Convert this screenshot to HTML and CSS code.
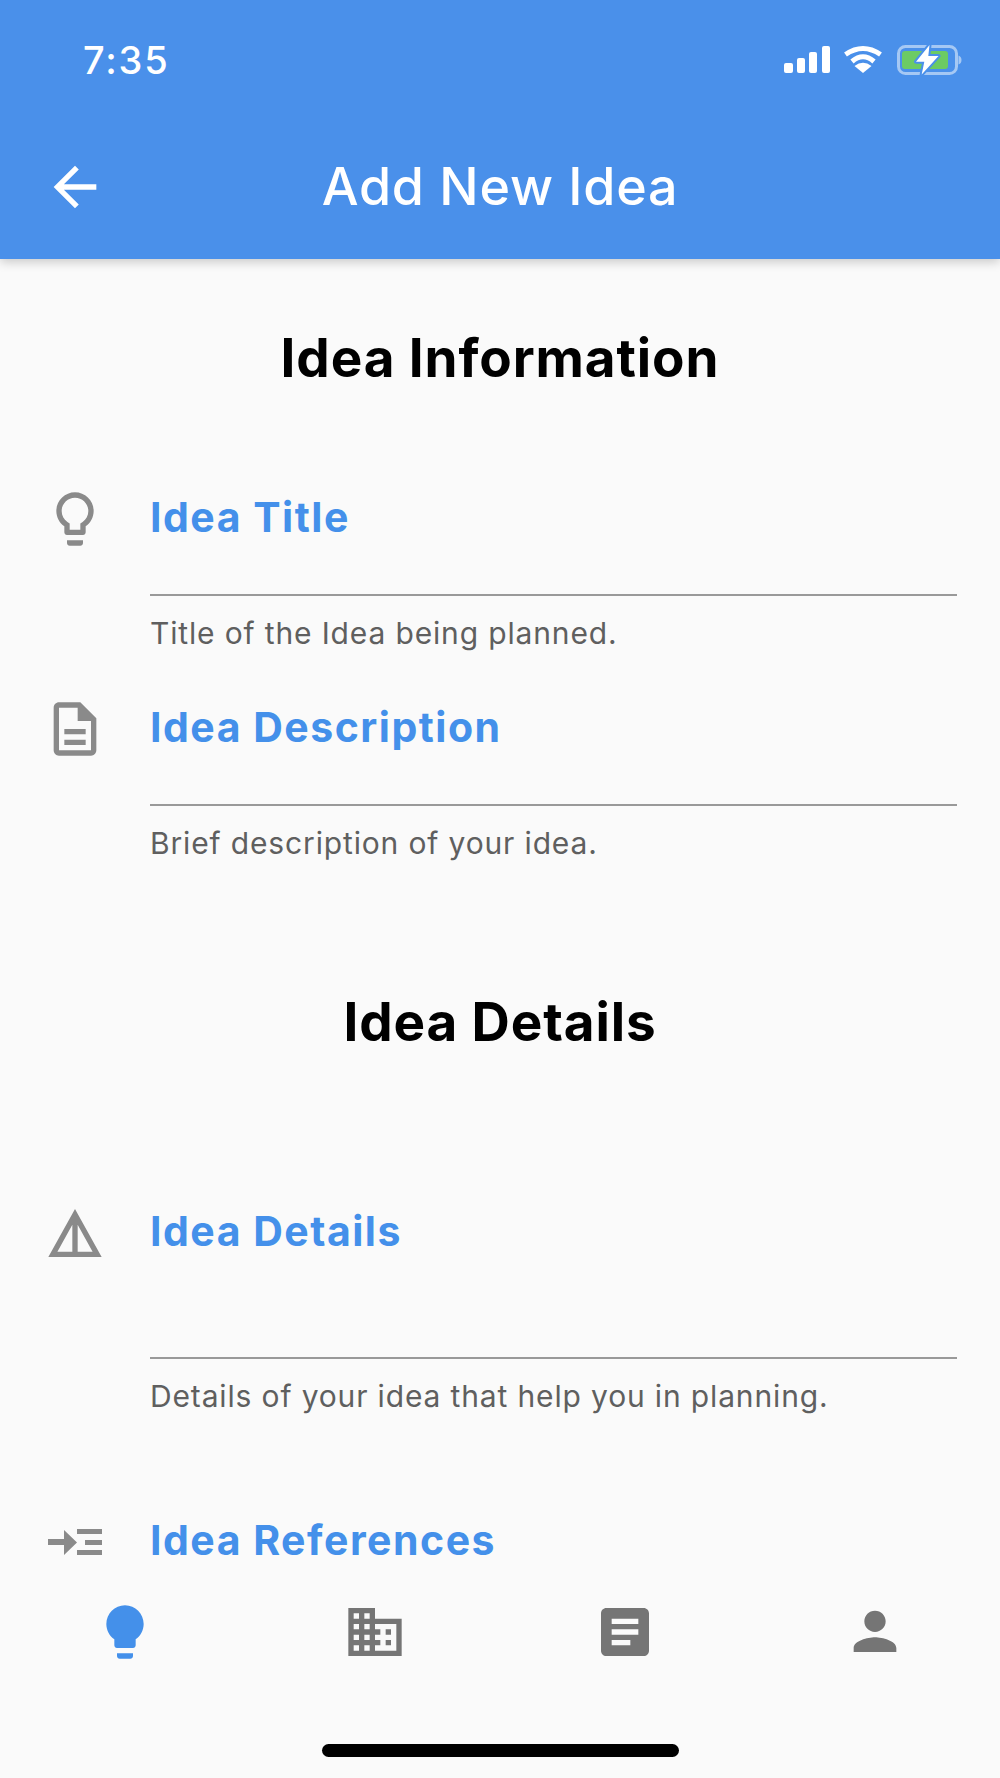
FILE: index.html
```html
<!DOCTYPE html>
<html lang="en">
<head>
  <meta charset="UTF-8" />
  <meta name="viewport" content="width=device-width, initial-scale=1.0"/>
  <title>Add New Idea</title>
  <link rel="stylesheet" href="styles.css">
</head>
<body>
  <header class="app-bar">
    <div class="status-bar">
      <span class="time">7:35</span>
      <svg class="status-icons" viewBox="0 0 180 34" width="180" height="34">
        <g fill="#fff">
          <rect x="1" y="20" width="9" height="10" rx="2"/>
          <rect x="14" y="15" width="8" height="15" rx="2"/>
          <rect x="26" y="9" width="8" height="21" rx="2"/>
          <rect x="39" y="3" width="8" height="27" rx="2"/>
          <path d="M80 30L71.5 23Q80 16.500 88.500 23Z"/>
        </g>
        <g fill="none" stroke="#fff" stroke-width="5">
          <path d="M62.500 11.500Q80 -.5 97.500 11.500"/>
          <path d="M69 18.500Q80 9 91 18.500"/>
        </g>
        <rect x="115.500" y="3.500" width="58" height="27" rx="7" fill="none" stroke="#a5c8f4" stroke-width="3"/>
        <path d="M175.500 12.500q3 1 3 4.500t-3 4.500z" fill="#a5c8f4"/>
        <rect x="119" y="8" width="46" height="18" rx="3" fill="#6ccb63"/>
        <path class="bolt" d="M146.500 2L133 18.700H141.300L138.700 31.500L155.500 13H145.300Z"/>
      </svg>
    </div>
    <div class="toolbar">
      <svg class="icon back" viewBox="0 0 24 24"><path d="M20 11H7.830l5.590-5.590L12 4l-8 8 8 8 1.410-1.410L7.830 13H20v-2z"/></svg>
      <h1>Add New Idea</h1>
    </div>
  </header>

  <main class="form">
    <h2 class="info-heading">Idea Information</h2>

    <div class="field">
      <svg class="icon" viewBox="0 0 24 24"><path d="M9 21c0 .55.45 1 1 1h4c.55 0 1-.45 1-1v-1H9v1zm3-19C8.140 2 5 5.140 5 9c0 2.380 1.190 4.470 3 5.740V17c0 .55.45 1 1 1h6c.55 0 1-.45 1-1v-2.260c1.810-1.270 3-3.360 3-5.740 0-3.860-3.140-7-7-7zm2.850 11.100l-.85.6V16h-4v-2.300l-.85-.6C7.800 12.160 7 10.630 7 9c0-2.760 2.240-5 5-5s5 2.240 5 5c0 1.630-.8 3.160-2.150 4.100z"/></svg>
      <div class="field-body">
        <label class="short">Idea Title</label>
        <p class="hint">Title of the Idea being planned.</p>
      </div>
    </div>

    <div class="field">
      <svg class="icon" viewBox="0 0 24 24"><path d="M8 16h8v2H8zm0-4h8v2H8zm6-10H6c-1.100 0-2 .9-2 2v16c0 1.100.89 2 1.990 2H18c1.100 0 2-.9 2-2V8l-6-6zm4 18H6V4h7v5h5v11z"/></svg>
      <div class="field-body">
        <label class="short">Idea Description</label>
        <p class="hint">Brief description of your idea.</p>
      </div>
    </div>

    <h2 class="details-heading">Idea Details</h2>

    <div class="field">
      <svg class="icon" viewBox="0 0 24 24"><path d="M12 3L2 21h20L12 3zm1 5.920L18.600 19H13V8.920zm-2 0V19H5.400L11 8.920z"/></svg>
      <div class="field-body">
        <label class="tall">Idea Details</label>
        <p class="hint">Details of your idea that help you in planning.</p>
      </div>
    </div>

    <div class="field refs">
      <svg class="icon" viewBox="0 0 64 64"><path d="M5 29h16v-9l13 12.500L21 45v-10H5zM34 19h25v5H34zM42 30h17v5H42zM34 40h25v5H34z"/></svg>
      <div class="field-body">
        <label>Idea References</label>
      </div>
    </div>
  </main>

  <nav class="bottom-nav">
    <div class="nav-row">
      <div class="nav-item active"><svg class="icon" viewBox="0 0 24 24"><path d="M9 21c0 .55.45 1 1 1h4c.55 0 1-.45 1-1v-1H9v1zm3-19C8.140 2 5 5.140 5 9c0 2.380 1.190 4.470 3 5.740V17c0 .55.45 1 1 1h6c.55 0 1-.45 1-1v-2.260c1.810-1.270 3-3.360 3-5.740 0-3.860-3.140-7-7-7z"/></svg></div>
      <div class="nav-item"><svg class="icon" viewBox="0 0 24 24"><path d="M12 7V3H2v18h20V7H12zM6 19H4v-2h2v2zm0-4H4v-2h2v2zm0-4H4V9h2v2zm0-4H4V5h2v2zm4 12H8v-2h2v2zm0-4H8v-2h2v2zm0-4H8V9h2v2zm0-4H8V5h2v2zm10 12h-8v-2h2v-2h-2v-2h2v-2h-2V9h8v10zm-2-8h-2v2h2v-2zm0 4h-2v2h2v-2z"/></svg></div>
      <div class="nav-item"><svg class="icon" viewBox="0 0 24 24"><path d="M19 3H5c-1.100 0-2 .9-2 2v14c0 1.100.9 2 2 2h14c1.100 0 2-.9 2-2V5c0-1.100-.9-2-2-2zm-5 14H7v-2h7v2zm3-4H7v-2h10v2zm0-4H7V7h10v2z"/></svg></div>
      <div class="nav-item"><svg class="icon" viewBox="0 0 24 24"><path d="M12 12c2.210 0 4-1.790 4-4s-1.790-4-4-4-4 1.790-4 4 1.790 4 4 4zm0 2c-2.670 0-8 1.340-8 4v1.500h16V18c0-2.660-5.330-4-8-4z"/></svg></div>
    </div>
    <div class="home-bar"></div>
  </nav>
</body>
</html>
```
FILE: styles.css
```css
* {
  box-sizing: border-box;
}
body {
  font-family: Inter, "Liberation Sans", sans-serif;
  margin: 0;
  height: 1778px;
  overflow: hidden;
  background: #fafafa;
  display: flex;
  flex-direction: column;
}
.icon {
  display: block;
  width: 64px;
  height: 64px;
  flex: none;
  fill: #8a8a8a;
}

/* top bar */
.app-bar {
  background: #4a90ea;
  height: 259px;
  flex: none;
  color: white;
  box-shadow: 0 3px 10px rgba(0,0,0,0.2);
  position: relative;
  z-index: 1;
}
.status-bar {
  height: 120px;
  padding: 43px 37px 0 83px;
  display: flex;
  justify-content: space-between;
  align-items: flex-start;
}
.time {
  font-size: 38px;
  font-weight: 500;
  line-height: 34px;
  letter-spacing: 1.8px;
}
.bolt {
  fill: white;
  stroke: #4a90ea;
  stroke-width: 4;
  stroke-linejoin: round;
  paint-order: stroke;
}
.toolbar {
  display: grid;
  grid-template-columns: 150px 1fr 150px;
  align-items: center;
  height: 134px;
}
.toolbar .back {
  fill: white;
  margin-left: 43px;
}
.toolbar h1 {
  margin: 0;
  text-align: center;
  font-size: 52px;
  font-weight: 500;
  line-height: 64px;
  letter-spacing: 0.75px;
}

/* form */
.form {
  flex: 1;
  overflow: hidden;
  padding-top: 66px;
}
.form h2 {
  margin: 0;
  text-align: center;
  font-size: 53px;
  font-weight: 700;
  line-height: 66px;
  letter-spacing: 0.9px;
  color: black;
}
.info-heading {
  margin-bottom: 94px !important;
}
.details-heading {
  margin-top: 128px !important;
  margin-bottom: 144px !important;
}
.field {
  display: flex;
  padding: 0 43px;
  margin-bottom: 44px;
}
.field-body {
  margin-left: 43px;
  flex: 1;
}
.field .icon {
  margin-top: 2px;
}
.field label {
  display: block;
  font-size: 41px;
  font-weight: 700;
  line-height: 64px;
  letter-spacing: 1.5px;
  color: #4490ea;
}
.field label.short {
  height: 111px;
  border-bottom: 2px solid #999;
}
.field label.tall {
  height: 160px;
  border-bottom: 2px solid #999;
}
.hint {
  margin: 19px 0 0;
  font-size: 30px;
  line-height: 36px;
  letter-spacing: 0.85px;
  color: #5f5f5f;
}
.refs {
  margin-top: 94px;
}

/* bottom tabs */
.bottom-nav {
  height: 198px;
  flex: none;
  background: #fafafa;
}
.nav-row {
  display: flex;
  padding-top: 20px;
}
.nav-item {
  flex: 1;
  display: flex;
  justify-content: center;
}
.nav-item .icon {
  fill: #757575;
}
.nav-item.active .icon {
  fill: #4490ea;
}
.home-bar {
  width: 357px;
  height: 13px;
  margin: 80px auto 0;
  border-radius: 7px;
  background: black;
}
```
